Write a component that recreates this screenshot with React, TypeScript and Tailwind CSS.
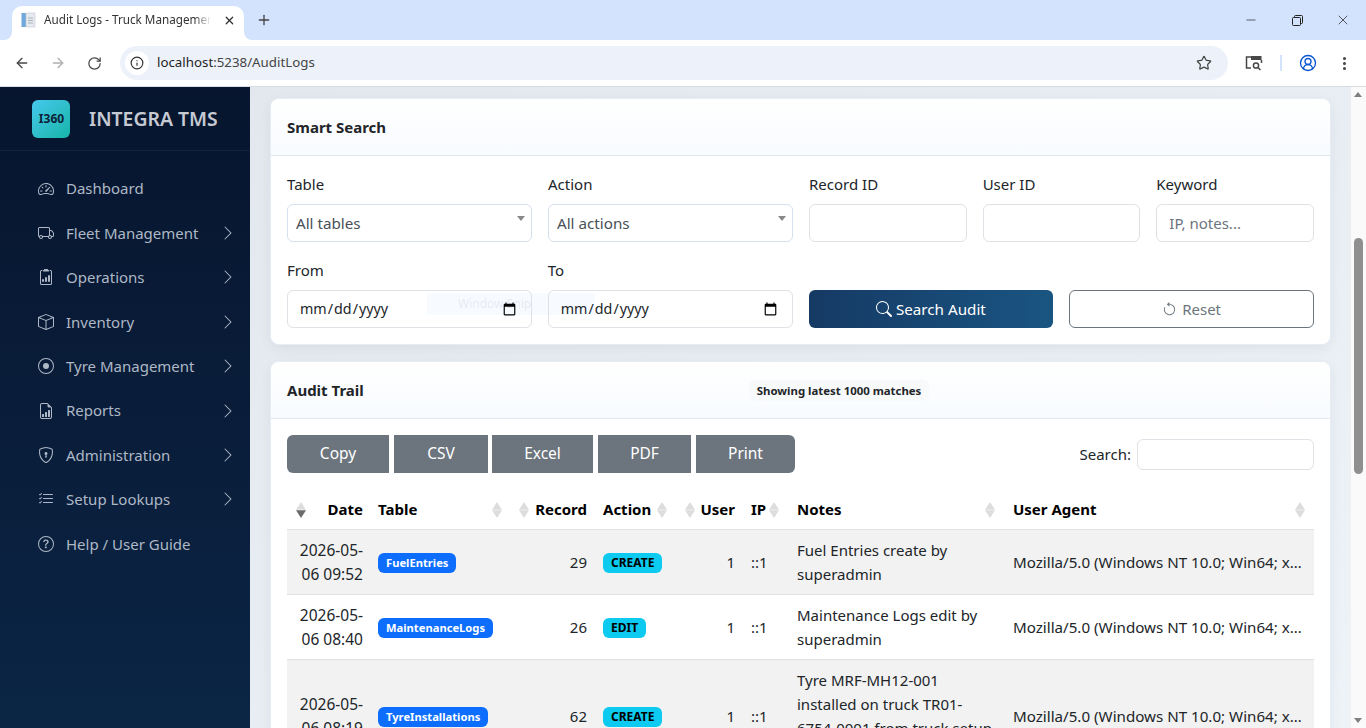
import type { ReactNode } from "react";
import {
  BsArrowCounterclockwise,
  BsBox,
  BsChevronRight,
  BsClipboard2Data,
  BsFileEarmarkBarGraph,
  BsListCheck,
  BsQuestionCircle,
  BsRecordCircle,
  BsSearch,
  BsShieldLock,
  BsSpeedometer2,
  BsTruck,
} from "react-icons/bs";
import {
  ArrowLeft,
  ArrowRight,
  CircleUserRound,
  EllipsisVertical,
  Info,
  Minus,
  Plus,
  RotateCw,
  Star,
  X,
} from "lucide-react";

const navItems = [
  { label: "Dashboard", icon: BsSpeedometer2, arrow: false },
  { label: "Fleet Management", icon: BsTruck, arrow: true },
  { label: "Operations", icon: BsClipboard2Data, arrow: true },
  { label: "Inventory", icon: BsBox, arrow: true },
  { label: "Tyre Management", icon: BsRecordCircle, arrow: true },
  { label: "Reports", icon: BsFileEarmarkBarGraph, arrow: true },
  { label: "Administration", icon: BsShieldLock, arrow: true },
  { label: "Setup Lookups", icon: BsListCheck, arrow: true },
  { label: "Help / User Guide", icon: BsQuestionCircle, arrow: false },
];

const rows = [
  {
    date: "2026-05-06 09:52",
    table: "FuelEntries",
    record: 29,
    action: "CREATE",
    notes: "Fuel Entries create by superadmin",
  },
  {
    date: "2026-05-06 08:40",
    table: "MaintenanceLogs",
    record: 26,
    action: "EDIT",
    notes: "Maintenance Logs edit by superadmin",
  },
  {
    date: "2026-05-06 08:19",
    table: "TyreInstallations",
    record: 62,
    action: "CREATE",
    notes: "Tyre MRF-MH12-001 installed on truck TR01-6754-0001 from truck setup page",
  },
];

function ChromeBar() {
  return (
    <div className="shrink-0 h-[87px] border-b border-[#d9dce1] bg-white relative z-10">
      <div className="h-10 bg-[#d3e3fd] flex items-end pl-3">
        <div className="relative w-[232px] h-[34px] bg-white rounded-t-[10px] flex items-center pl-[9px] pr-2 pb-[6px] text-[11.7px] text-[#333]">
          {/* flared tab corners */}
          <div className="absolute -left-[8px] bottom-0 w-2 h-2 bg-white">
            <div className="w-2 h-2 bg-[#d3e3fd] rounded-br-[8px]" />
          </div>
          <div className="absolute -right-[8px] bottom-0 w-2 h-2 bg-white">
            <div className="w-2 h-2 bg-[#d3e3fd] rounded-bl-[8px]" />
          </div>
          <svg width="16" height="16" viewBox="0 0 16 16" className="shrink-0">
            <rect x="0.5" y="1" width="5" height="14" fill="#6fa8dc" />
            <rect x="5" y="1" width="9" height="14" fill="#e6e9ee" stroke="#c3c8d0" strokeWidth="0.6" />
            <path d="M7 6h5M7 8.5h5M7 11h5" stroke="#aab2bd" strokeWidth="1" />
          </svg>
          <span className="ml-[7px] w-[169px] overflow-hidden whitespace-nowrap [mask-image:linear-gradient(to_right,black_90%,transparent)]">
            Audit Logs - Truck Management
          </span>
          <X size={13} strokeWidth={2.4} className="ml-[12px] text-[#333]" />
        </div>
        <div className="h-10 flex items-center ml-[12px]">
          <Plus size={16} strokeWidth={2} className="text-[#444]" />
        </div>
        <div className="ml-auto h-10 flex items-center text-[#222]">
          <div className="w-[46px] flex justify-center">
            <Minus size={14} strokeWidth={1.2} />
          </div>
          <div className="w-[46px] flex justify-center">
            <svg width="11" height="11" viewBox="0 0 11 11" fill="none" stroke="currentColor">
              <rect x="0.5" y="2.5" width="8" height="8" rx="1" />
              <path d="M2.5 2.5V1.5a1 1 0 0 1 1-1h6a1 1 0 0 1 1 1v6a1 1 0 0 1-1 1h-1" />
            </svg>
          </div>
          <div className="w-[46px] flex justify-center">
            <X size={16} strokeWidth={1.1} />
          </div>
        </div>
      </div>
      <div className="h-[46px] flex items-center text-[#474747]">
        <ArrowLeft size={16} strokeWidth={2} className="ml-[14px]" />
        <ArrowRight size={16} strokeWidth={2} className="ml-[20px] text-[#b0b0b0]" />
        <RotateCw size={15} strokeWidth={2} className="ml-[21px]" />
        <div className="ml-[18px] w-[1108px] h-[34px] rounded-full bg-[#edf2fa] flex items-center pl-[5px] pr-[16px]">
          <div className="w-6 h-6 rounded-full bg-white flex items-center justify-center">
            <Info size={14} strokeWidth={2} className="text-[#333]" />
          </div>
          <span className="ml-[8px] text-[13.3px] text-[#1f1f1f]">
            localhost<span className="text-[#444]">:5238/AuditLogs</span>
          </span>
          <Star size={16} strokeWidth={1.8} className="ml-auto text-[#444]" />
        </div>
        <svg width="18" height="16" viewBox="0 0 18 16" className="ml-[17px]" fill="none">
          <path d="M7 2H1.5v11H6" stroke="#474747" strokeWidth="1.5" />
          <rect x="6" y="1" width="10.5" height="4" fill="#474747" />
          <path d="M16.5 5v3" stroke="#474747" strokeWidth="1.5" />
          <circle cx="11" cy="10.5" r="2.6" stroke="#474747" strokeWidth="1.5" />
          <path d="M13 12.5l2.5 2.5" stroke="#474747" strokeWidth="1.5" />
        </svg>
        <div className="ml-[17px] w-[2px] h-4 bg-[#d3e3fd]" />
        <CircleUserRound size={18} strokeWidth={1.8} className="ml-[17px] text-[#0b57d0]" />
        <EllipsisVertical size={17} strokeWidth={2.4} className="ml-[19px]" />
      </div>
    </div>
  );
}

function Sidebar() {
  return (
    <aside className="w-[250px] shrink-0 bg-gradient-to-b from-[#07152e] to-[#0b2545]">
      <div className="h-[64px] border-b border-white/5 flex items-center pl-8">
        <div className="w-[38px] h-[38px] rounded-md bg-gradient-to-br from-[#45c8ee] to-[#12b5a8] flex items-center justify-center text-[#0b2238] text-xs font-bold pl-[1px]">
          I360
        </div>
        <span className="ml-[19px] pt-[1px] text-[19.4px] font-semibold text-[#c5cad3]">INTEGRA TMS</span>
      </div>
      <nav className="pt-[15.5px]">
        {navItems.map((item) => (
          <div key={item.label} className="h-[44.4px] flex items-center pl-[38px] pr-[14px] text-[#aeb8c6]">
            <item.icon size={16} />
            <span className="ml-3 text-[15px]">{item.label}</span>
            {item.arrow && <BsChevronRight size={16} className="ml-auto" />}
          </div>
        ))}
      </nav>
    </aside>
  );
}

function Field({ label, children }: { label: string; children: ReactNode }) {
  return (
    <div>
      <label className="block h-[32px] leading-[22px] pt-[1px] text-[#212529] text-[15px]">{label}</label>
      {children}
    </div>
  );
}

function Select({ text }: { text: string }) {
  return (
    <div className="relative">
      <select className="appearance-none w-full h-[38px] border border-[#d5e1ef] rounded-md pl-2 pt-[1px] text-[15.2px] text-[#495057] bg-white">
        <option>{text}</option>
      </select>
      <div className="absolute right-[7px] top-[12px] w-0 h-0 border-x-[4px] border-x-transparent border-t-[5px] border-t-[#888]" />
    </div>
  );
}

const inputClass =
  "w-full h-[38px] border border-[#dee2e6] rounded-md px-3 text-[15px] text-[#212529] bg-white placeholder:text-[#6c757d] outline-none";

// transparent so the faint tooltip behind shows through, calendar icon stays black
const dateClass =
  "relative z-[2] w-full h-[38px] border border-[#dee2e6] rounded-md pl-[11px] pr-3 text-[14.3px] text-[#212529] bg-transparent outline-none";

function CardHeader({ children }: { children: ReactNode }) {
  return (
    <div className="h-[57px] flex items-center px-4 pt-[1px] border-b border-[#dfe7f1] bg-gradient-to-b from-white to-[#f8fbff] rounded-t-lg">
      {children}
    </div>
  );
}

function SortIcon({ desc, className }: { desc?: boolean; className: string }) {
  return (
    <svg width="10" height="16" viewBox="0 0 10 16" className={"absolute top-1/2 -translate-y-1/2 " + className}>
      <path d="M5 0l5 7.7H0z" fill="#ddd" />
      <path d="M5 16L0 8.3h10z" fill={desc ? "#6b6b6b" : "#ddd"} />
    </svg>
  );
}

function SearchCard() {
  return (
    <section className="bg-white rounded-lg shadow-[0_0_0_1px_#e6edf5,0_4px_14px_rgba(20,40,70,0.07)]">
      <CardHeader>
        <h2 className="font-bold text-[15px] text-[#212529]">Smart Search</h2>
      </CardHeader>
      <div className="px-4 pt-4 pb-4">
        <div className="grid grid-cols-[245px_245px_1fr_1fr_1fr] gap-x-4">
          <Field label="Table">
            <Select text="All tables" />
          </Field>
          <Field label="Action">
            <Select text="All actions" />
          </Field>
          <Field label="Record ID">
            <input className={inputClass} />
          </Field>
          <Field label="User ID">
            <input className={inputClass} />
          </Field>
          <Field label="Keyword">
            <input className={inputClass} placeholder="IP, notes..." />
          </Field>
        </div>
        <div className="grid grid-cols-4 gap-x-4 mt-4">
          <Field label="From">
            <input type="date" className={dateClass} />
          </Field>
          <Field label="To">
            <input type="date" className={dateClass} />
          </Field>
          <div className="pt-[32px]">
            <button className="w-full h-[38px] rounded-md bg-gradient-to-r from-[#153a64] to-[#1a5582] text-white text-[15.2px] flex items-center justify-center gap-1">
              <BsSearch size={16} />
              Search Audit
            </button>
          </div>
          <div className="pt-[32px]">
            <button className="w-full h-[38px] rounded-md border border-[#6c757d] bg-white text-[#6c757d] text-[15px] flex items-center justify-center gap-[5px]">
              <BsArrowCounterclockwise size={15} />
              Reset
            </button>
          </div>
        </div>
      </div>
    </section>
  );
}

function Badge({ color, children }: { color: string; children: ReactNode }) {
  return <span className={"inline-block align-middle h-5 leading-5 px-2 rounded-md font-bold " + color}>{children}</span>;
}

function AuditCard() {
  const buttons = [
    { label: "Copy", w: "w-[102px] rounded-l-md" },
    { label: "CSV", w: "w-[94px] ml-[5px]" },
    { label: "Excel", w: "w-[101px] ml-[4px]" },
    { label: "PDF", w: "w-[93px] ml-[5px]" },
    { label: "Print", w: "w-[99px] ml-[5px] rounded-r-md" },
  ];
  return (
    <section className="bg-white rounded-t-lg mt-[18px] shadow-[0_0_0_1px_#e6edf5,0_4px_14px_rgba(20,40,70,0.07)]">
      <CardHeader>
        <h2 className="font-bold text-[15px] text-[#212529]">Audit Trail</h2>
        <span className="ml-[385px] h-[21px] leading-[21px] px-2 rounded-md bg-[#f8f9fa] text-[11.4px] font-bold text-[#212529]">
          Showing latest 1000 matches
        </span>
      </CardHeader>
      <div className="px-4 pt-4">
        <div className="flex items-center h-[38px]">
          <div className="flex">
            {buttons.map((b) => (
              <button key={b.label} className={"h-[38px] bg-[#6c757d] text-white text-[15.5px] " + b.w}>
                {b.label}
              </button>
            ))}
          </div>
          <label className="ml-auto pt-[1px] text-[15px] text-[#212529]">Search:</label>
          <input className="ml-[6px] w-[177px] h-[31px] border border-[#dee2e6] rounded-md bg-white" />
        </div>
        <table className="w-[1027px] mt-[19px] table-fixed border-collapse text-[15px] text-[#212529]">
          <colgroup>
            <col className="w-[83px]" />
            <col className="w-[142px]" />
            <col className="w-[83px]" />
            <col className="w-[82px]" />
            <col className="w-[66px]" />
            <col className="w-[46px]" />
            <col className="w-[216px]" />
            <col className="w-[309px]" />
          </colgroup>
          <thead>
            <tr className="h-[37px] border-b border-[#dee2e6] font-bold text-black">
              <th className="relative text-right pr-[7px] pb-[2px]">
                <SortIcon desc className="left-[9px]" />
                Date
              </th>
              <th className="relative text-left pl-2 pb-[2px]">
                Table
                <SortIcon className="right-[10px]" />
              </th>
              <th className="relative text-right pr-2 pb-[2px]">
                <SortIcon className="left-[7px]" />
                Record
              </th>
              <th className="relative text-left pl-2 pb-[2px]">
                Action
                <SortIcon className="right-[10px]" />
              </th>
              <th className="relative text-right pr-2 pb-[2px]">
                <SortIcon className="left-2" />
                User
              </th>
              <th className="relative text-left pl-2 pb-[2px]">
                IP
                <SortIcon className="right-[10px]" />
              </th>
              <th className="relative text-left pl-2 pb-[2px]">
                Notes
                <SortIcon className="right-[10px]" />
              </th>
              <th className="relative text-left pl-2 pb-[2px]">
                User Agent
                <SortIcon className="right-[9px]" />
              </th>
            </tr>
          </thead>
          <tbody>
            {rows.map((row, i) => (
              <tr key={row.record} className={"border-b border-[#dee2e6] " + (i % 2 === 0 ? "bg-[#f2f2f2]" : "bg-white")}>
                <td className="py-2 pl-2 pr-[7px] text-right leading-6 text-[15.5px]">{row.date}</td>
                <td className="pt-[9px] pb-2 pl-2">
                  <Badge color="text-[11.2px] bg-[#0d6efd] text-white">{row.table}</Badge>
                </td>
                <td className="pt-[9px] pb-2 pr-2 text-right">{row.record}</td>
                <td className="pt-[9px] pb-2 pl-2">
                  <Badge color="text-xs bg-[#0dcaf0] text-black">{row.action}</Badge>
                </td>
                <td className="pt-[9px] pb-2 pr-2 text-right">1</td>
                <td className="pt-[9px] pb-2 pl-2">::1</td>
                <td className="py-2 pl-2 pr-[10px] leading-6">{row.notes}</td>
                <td className="pt-[9px] pb-2 px-2 text-[15.15px]">
                  <div className="truncate">Mozilla/5.0 (Windows NT 10.0; Win64; x64) AppleWebKit/537.36</div>
                </td>
              </tr>
            ))}
          </tbody>
        </table>
      </div>
    </section>
  );
}

function Scrollbar() {
  return (
    <div className="w-[15px] shrink-0 bg-[#fafafa] relative">
      <div className="absolute left-[3px] top-[5px] w-0 h-0 border-x-[4.5px] border-x-transparent border-b-[5px] border-b-[#7f7f7f]" />
      <div className="absolute left-[3px] top-[151px] w-[9px] h-[236px] rounded-full bg-[#8f8f8f]" />
      <div className="absolute left-[3px] bottom-[5px] w-0 h-0 border-x-[4.5px] border-x-transparent border-t-[5px] border-t-[#7f7f7f]" />
    </div>
  );
}

export default function App() {
  return (
    <div className="h-[728px] overflow-hidden flex flex-col font-['Noto_Sans','Liberation_Sans',sans-serif]">
      <ChromeBar />
      <div className="flex-1 min-h-0 flex relative">
        <Sidebar />
        <main className="flex-1 min-w-0 overflow-hidden px-[21px] pt-3 bg-gradient-to-br from-[#e3e8ee] to-[#eef3f8]">
          <SearchCard />
          <AuditCard />
        </main>
        <Scrollbar />
        {/* leftover snipping tool tooltip, very faint in the shot */}
        <div className="absolute z-[1] left-[427px] top-[206px] w-[168px] h-[22px] bg-[#eaf3ff]/40 pl-[31px] text-xs leading-[22px] text-[#9aa5b1]/20 pointer-events-none">
          Window Snip
        </div>
      </div>
    </div>
  );
}
